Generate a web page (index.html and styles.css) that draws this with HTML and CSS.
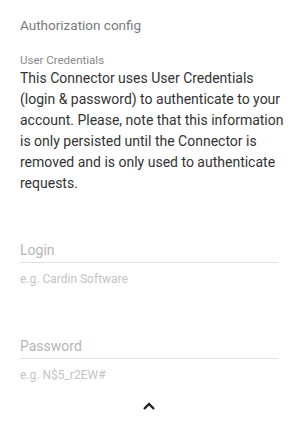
FILE: index.html
```html
<!DOCTYPE html>
<html lang="en">
<head>
  <meta charset="UTF-8" />
  <meta name="viewport" content="width=device-width, initial-scale=1.0" />
  <title>Authorization config</title>
  <link rel="stylesheet" href="styles.css">
</head>
<body>
  <div class="panel">
    <h2 class="title">Authorization config</h2>

    <div class="section">
      <div class="section-label">User Credentials</div>
      <p class="description">This Connector uses User Credentials (login &amp; password) to authenticate to your account. Please, note that this information is only persisted until the Connector is removed and is only used to authenticate requests.</p>
    </div>

    <div class="field field-login">
      <label for="login">Login</label>
      <input id="login" type="text" placeholder="e.g. Cardin Software" />
    </div>

    <div class="field field-password">
      <label for="password">Password</label>
      <input id="password" type="text" placeholder="e.g. N$5_r2EW#" />
    </div>

    <button class="collapse" aria-label="Collapse">
      <svg width="14" height="10" viewBox="0 0 14 10">
        <path d="M2 8 L7 3 L12 8" fill="none" stroke="#222" stroke-width="2.4" />
      </svg>
    </button>
  </div>
</body>
</html>
```

FILE: styles.css
```css
body {
  font-family: Roboto, "Liberation Sans", Arial, sans-serif;
  background-color: #fff;
  margin: 0;
}

.panel {
  padding: 16px 22px 0 20px;
}

.title {
  margin: 0;
  font-size: 13.5px;
  font-weight: normal;
  color: #7a7a7a;
  line-height: 18px;
}

.section {
  margin-top: 19px;
}

.section-label {
  font-size: 11.5px;
  color: #8a8a8a;
  line-height: 14px;
}

.description {
  margin: 1px -12px 0 0;
  font-size: 14px;
  line-height: 21px;
  color: #333;
}

.field {
  display: flex;
  flex-direction: column;
}

.field label {
  font-size: 14px;
  color: #b5b5b5;
  padding-bottom: 4px;
  border-bottom: 1px solid #e2e2e2;
}

.field input {
  border: none;
  padding: 0;
  margin-top: 9px;
  font-family: Roboto, sans-serif;
  font-size: 12px;
  outline: none;
}

.field input::placeholder {
  color: #c4c4c4;
}

.field-login {
  margin-top: 48px;
}

.field-password {
  margin-top: 52px;
}

.collapse {
  display: block;
  margin: 17px auto 0;
  padding: 0;
  border: none;
  background: none;
  cursor: pointer;
}
```
